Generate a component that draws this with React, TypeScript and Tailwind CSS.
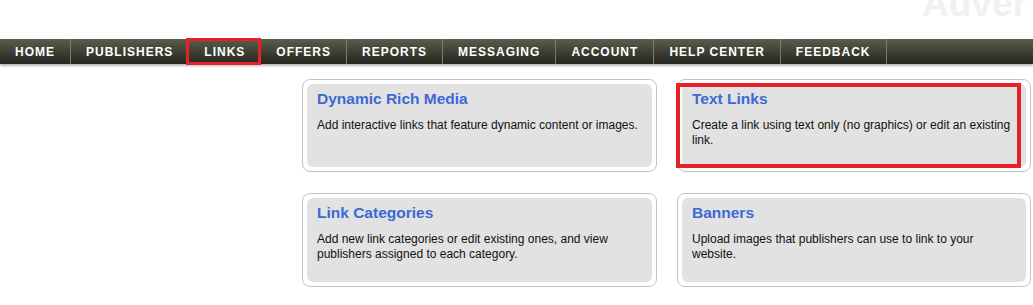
const navItems = ["HOME", "PUBLISHERS", "LINKS", "OFFERS", "REPORTS", "MESSAGING", "ACCOUNT", "HELP CENTER", "FEEDBACK"];

const cards = [
  { title: "Dynamic Rich Media", text: "Add interactive links that feature dynamic content or images.", marked: false },
  { title: "Text Links", text: "Create a link using text only (no graphics) or edit an existing link.", marked: true },
  { title: "Link Categories", text: "Add new link categories or edit existing ones, and view publishers assigned to each category.", marked: false },
  { title: "Banners", text: "Upload images that publishers can use to link to your website.", marked: false },
];

export default function App() {
  return (
    <div className="w-[1033px] h-[305px] overflow-hidden bg-white" style={{ fontFamily: '"Liberation Sans", Arial, sans-serif' }}>
      <div className="h-[39px] overflow-hidden">
        <div className="ml-[922px] mt-[-15px] whitespace-nowrap text-[37px] leading-[37px] font-bold text-[#f1f1f1]">
          Adver
        </div>
      </div>

      <nav className="flex h-[25px] bg-gradient-to-b from-[#5b5d4c] to-[#25261e] shadow-[0_2px_2px_rgba(0,0,0,0.28)]">
        {navItems.map((item) => (
          <div
            key={item}
            className="relative flex items-center px-[15px] border-r border-[#7a7b6c] text-[12px] font-bold tracking-[1px] text-white"
          >
            {item}
            {item === "LINKS" && (
              <div className="absolute left-[-3px] right-[-1px] top-[-1px] bottom-[-1px] border-[3px] border-[#e8202a]" />
            )}
          </div>
        ))}
      </nav>

      <div className="pl-[302px] pt-[15px]">
        <div className="grid grid-cols-[355px_354px] gap-x-[20px] gap-y-[21px]">
          {cards.map((card, i) => (
            <div
              key={card.title}
              className={`relative border border-[#c4c4c4] rounded-[8px] bg-white p-[4px] ${i < 2 ? "h-[93px]" : "h-[94px]"}`}
            >
              <div className="h-full rounded-[6px] bg-[#e2e2e2] pl-[10px] pr-[12px] pt-[6px]">
                <div className="text-[15.5px] leading-[18px] font-bold text-[#3b69d5]">{card.title}</div>
                <div className="mt-[10px] text-[12px] leading-[15px] text-[#111]">{card.text}</div>
              </div>
              {card.marked && (
                <div className="absolute left-[-2px] right-[9px] top-[3px] bottom-[3px] border-[4px] border-[#e8202a]" />
              )}
            </div>
          ))}
        </div>
      </div>
    </div>
  );
}
